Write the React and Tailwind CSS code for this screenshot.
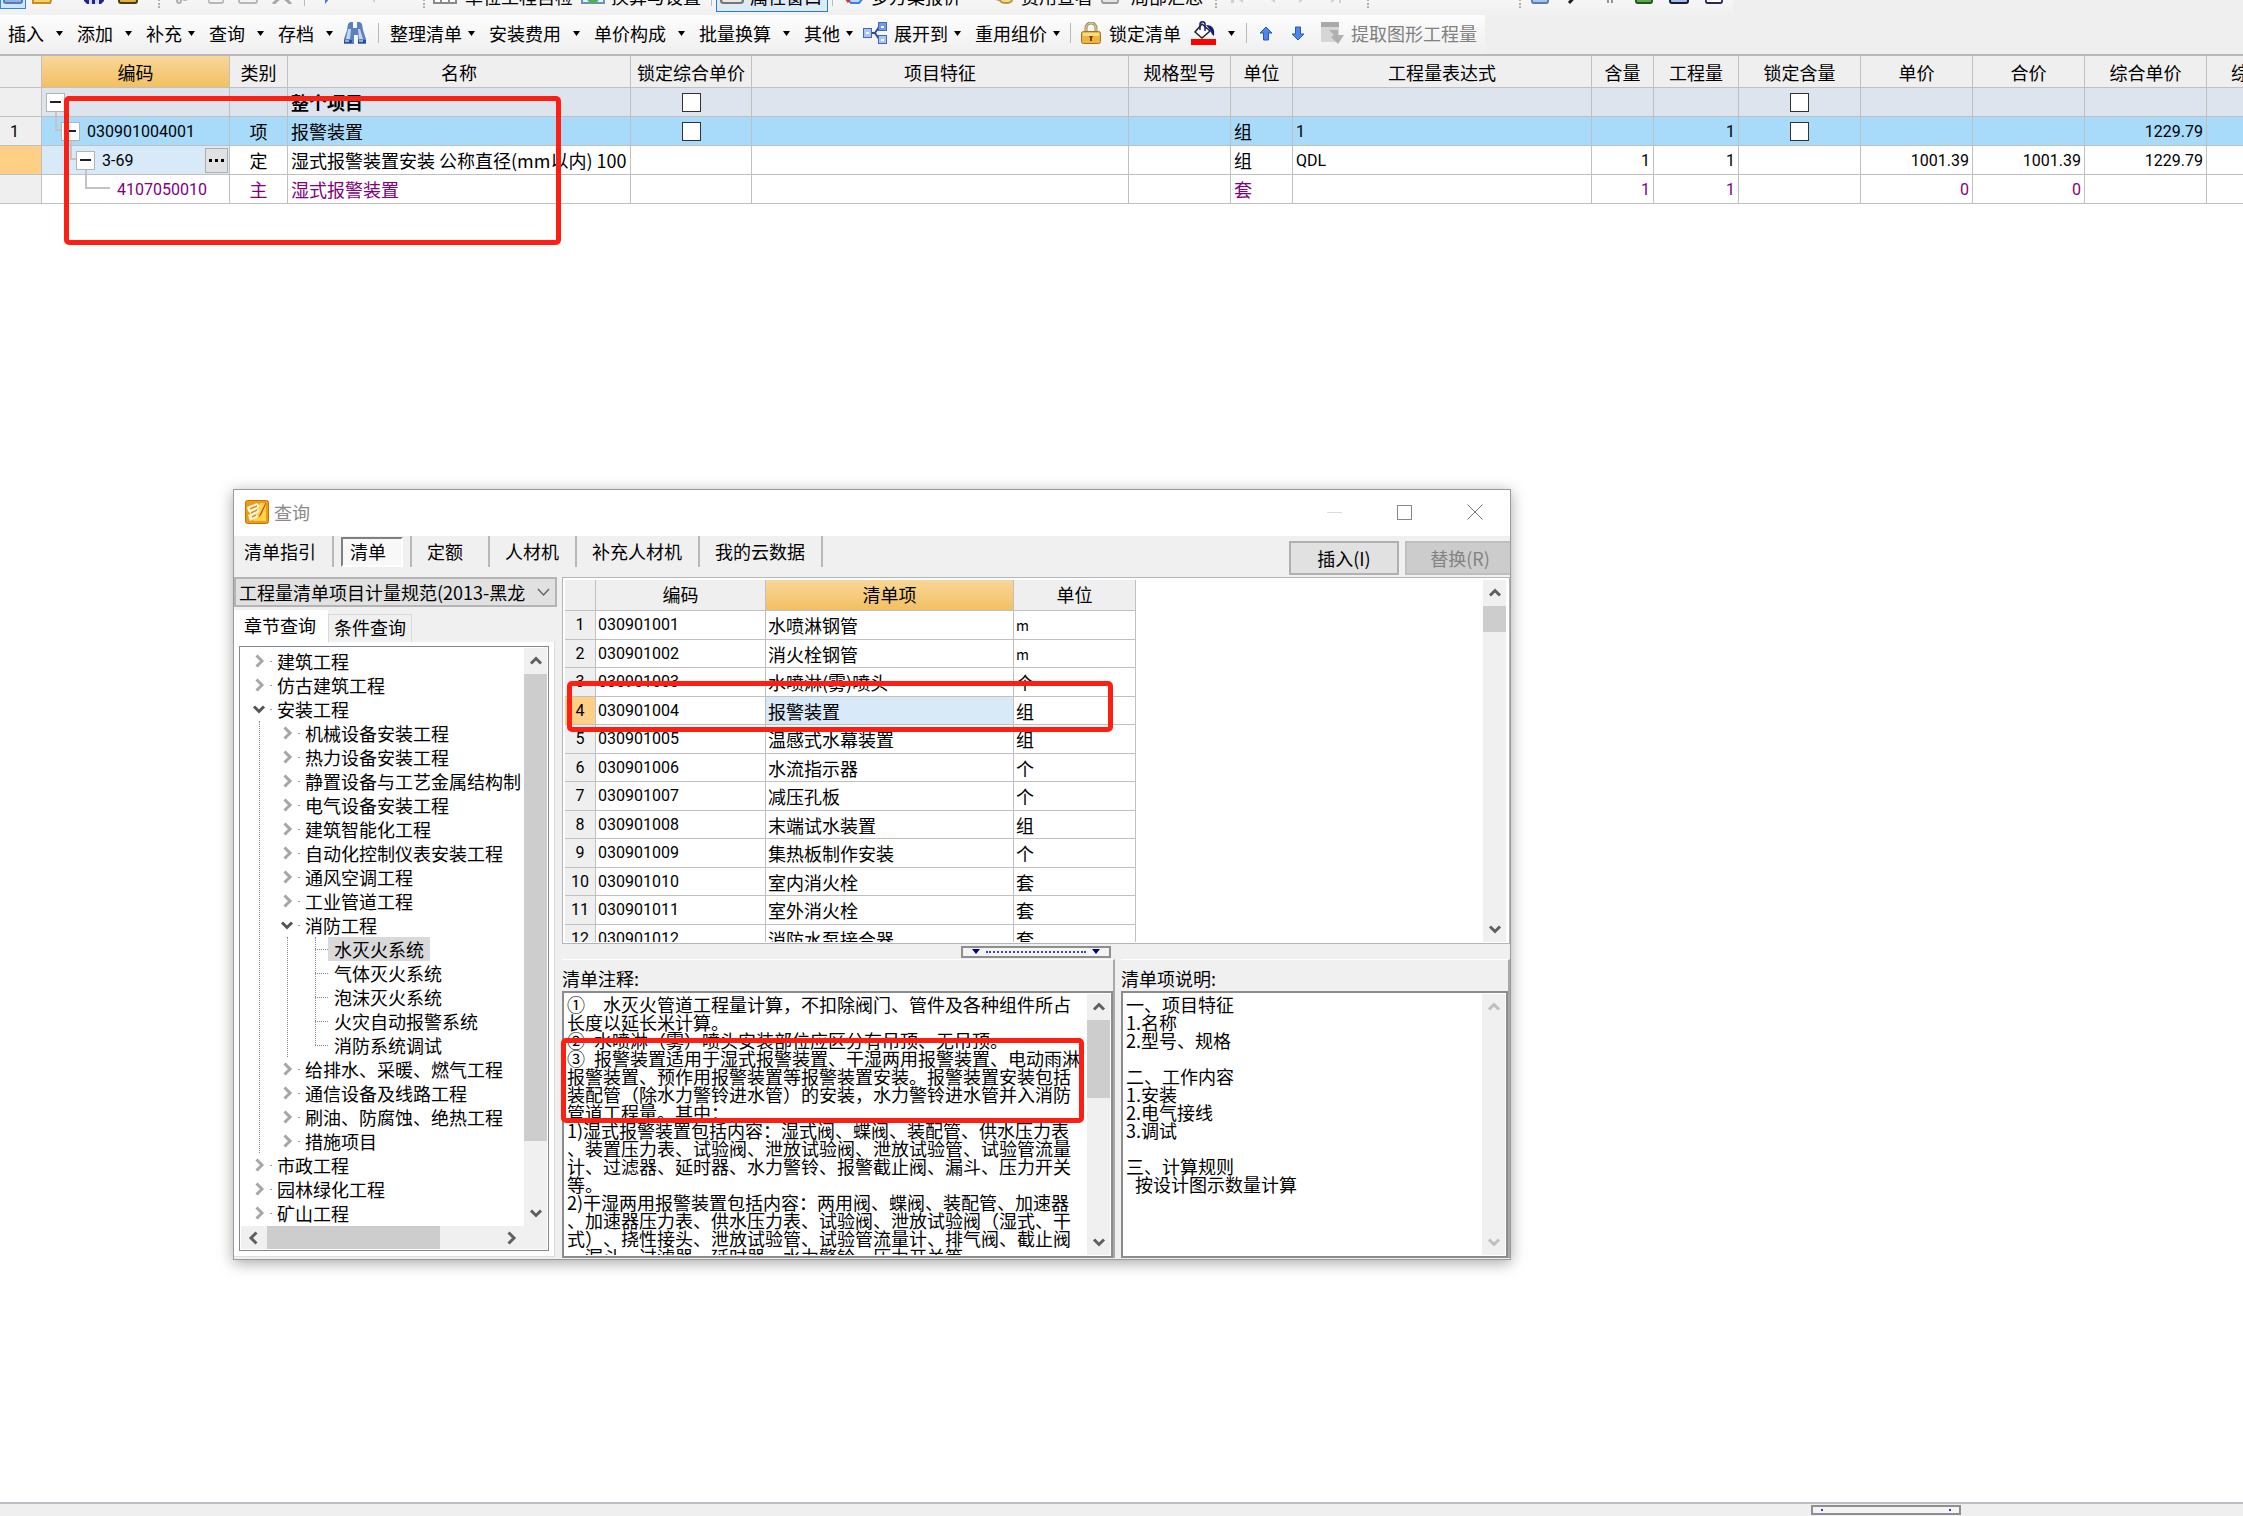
import clsx from "clsx";

const columns = [
  { title: "", width: "w-[42px]" },
  { title: "编码", width: "w-[188px]", active: true },
  { title: "类别", width: "w-[58px]" },
  { title: "名称", width: "w-[343px]" },
  { title: "锁定综合单价", width: "w-[121px]" },
  { title: "项目特征", width: "w-[377px]" },
  { title: "规格型号", width: "w-[102px]" },
  { title: "单位", width: "w-[62px]" },
  { title: "工程量表达式", width: "w-[299px]" },
  { title: "含量", width: "w-[62px]" },
  { title: "工程量", width: "w-[85px]" },
  { title: "锁定含量", width: "w-[122px]" },
  { title: "单价", width: "w-[112px]" },
  { title: "合价", width: "w-[112px]" },
  { title: "综合单价", width: "w-[122px]" },
  { title: "综合合价", width: "w-[121px]" },
];

const budgetRows = [
  { level: 0, name: "整个项目", bold: true, check: true, bg: "bg-[#dde4ee]" },
  { no: "1", level: 1, code: "030901004001", kind: "项", name: "报警装置", check: true, unit: "组", expr: "1", qty: "1", total: "1229.79", bg: "bg-[#a8dbfa]" },
  { level: 2, code: "3-69", kind: "定", name: "湿式报警装置安装 公称直径(mm以内) 100", unit: "组", expr: "QDL", content: "1", qty: "1", price: "1001.39", sum: "1001.39", total: "1229.79", current: true },
  { level: 3, code: "4107050010", kind: "主", name: "湿式报警装置", unit: "套", content: "1", qty: "1", price: "0", sum: "0", color: "text-[#800080]" },
];

const listItems = [
  ["030901001", "水喷淋钢管", "m"],
  ["030901002", "消火栓钢管", "m"],
  ["030901003", "水喷淋(雾)喷头", "个"],
  ["030901004", "报警装置", "组"],
  ["030901005", "温感式水幕装置", "组"],
  ["030901006", "水流指示器", "个"],
  ["030901007", "减压孔板", "个"],
  ["030901008", "末端试水装置", "组"],
  ["030901009", "集热板制作安装", "个"],
  ["030901010", "室内消火栓", "套"],
  ["030901011", "室外消火栓", "套"],
  ["030901012", "消防水泵接合器", "套"],
];

const tree = [
  { text: "建筑工程" },
  { text: "仿古建筑工程" },
  {
    text: "安装工程",
    children: [
      { text: "机械设备安装工程" },
      { text: "热力设备安装工程" },
      { text: "静置设备与工艺金属结构制" },
      { text: "电气设备安装工程" },
      { text: "建筑智能化工程" },
      { text: "自动化控制仪表安装工程" },
      { text: "通风空调工程" },
      { text: "工业管道工程" },
      {
        text: "消防工程",
        children: [
          { text: "水灭火系统", leaf: true, selected: true },
          { text: "气体灭火系统", leaf: true },
          { text: "泡沫灭火系统", leaf: true },
          { text: "火灾自动报警系统", leaf: true },
          { text: "消防系统调试", leaf: true },
        ],
      },
      { text: "给排水、采暖、燃气工程" },
      { text: "通信设备及线路工程" },
      { text: "刷油、防腐蚀、绝热工程" },
      { text: "措施项目" },
    ],
  },
  { text: "市政工程" },
  { text: "园林绿化工程" },
  { text: "矿山工程" },
];

const notes = `①\u3000水灭火管道工程量计算，不扣除阀门、管件及各种组件所占
长度以延长米计算。
②\u2002水喷淋（雾）喷头安装部位应区分有吊顶、无吊顶。
③\u2002报警装置适用于湿式报警装置、干湿两用报警装置、电动雨淋
报警装置、预作用报警装置等报警装置安装。报警装置安装包括
装配管（除水力警铃进水管）的安装，水力警铃进水管并入消防
管道工程量。其中：
1)湿式报警装置包括内容：湿式阀、蝶阀、装配管、供水压力表
、装置压力表、试验阀、泄放试验阀、泄放试验管、试验管流量
计、过滤器、延时器、水力警铃、报警截止阀、漏斗、压力开关
等。
2)干湿两用报警装置包括内容：两用阀、蝶阀、装配管、加速器
、加速器压力表、供水压力表、试验阀、泄放试验阀（湿式、干
式）、挠性接头、泄放试验管、试验管流量计、排气阀、截止阀
、漏斗、过滤器、延时器、水力警铃、压力开关等。`;

const details = `一、项目特征
1.名称
2.型号、规格

二、工作内容
1.安装
2.电气接线
3.调试

三、计算规则
\u2002按设计图示数量计算`;

function Caret() {
  return (
    <svg className="w-[7px] h-[5px] shrink-0" viewBox="0 0 7 5">
      <path d="M0 0h7L3.5 5z" fill="#000" />
    </svg>
  );
}

function Chevron({ dir, className = "text-[#606060]" }) {
  const d = {
    up: "M2 9.5 7 4.5l5 5",
    down: "M2 4.5l5 5 5-5",
    left: "M9.5 1.500 4 7l5.500 5.500",
    right: "M4.5 1.500 10 7l-5.500 5.500",
  }[dir];
  return (
    <svg className={clsx("w-[14px] h-[14px] shrink-0", className)} viewBox="0 0 14 14" fill="none" stroke="currentColor" strokeWidth="3">
      <path d={d} />
    </svg>
  );
}

function Binoculars() {
  return (
    <svg className="w-6 h-6 shrink-0" viewBox="0 0 24 24">
      <path d="M5 3l2-2h3v6h4V1h3l2 2 1 6 3 9v5h-8v-9h-4v9H1v-5l3-9z" fill="#5b82bd" />
      <path d="M5 8l-2 10h4l1-10zM15 8l1 10h4l-3-10z" fill="#c3d5ef" />
      <path d="M1 19h8v3H1zM15 19h8v3h-8z" fill="#2c4f93" />
      <path d="M2 19h4v2H2zM16 19h4v2h-4z" fill="#8fb0e0" />
    </svg>
  );
}

function NodesIcon() {
  return (
    <svg className="w-[25px] h-6 shrink-0" viewBox="0 0 25 24">
      <path d="M8 12h5M16 6l-4 6 4 6" stroke="#2f4f92" strokeWidth="2" fill="none" />
      <g stroke="#4468b4">
        <rect x=".5" y="7.500" width="8" height="9" fill="#a9c5f5" />
        <rect x="15.500" y="1.500" width="8" height="8" fill="#6f9bee" />
        <rect x="15.500" y="14.500" width="8" height="8" fill="#a9c5f5" />
      </g>
      <path d="M3 12h3M18 6h3M18 19h3" stroke="#fff" strokeWidth="2" />
    </svg>
  );
}

function LockIcon() {
  return (
    <svg className="w-5 h-[22px] shrink-0" viewBox="0 0 20 22">
      <path d="M5 10V6a5 5 0 0 1 10 0v4" fill="none" stroke="#9a8a5a" strokeWidth="3" />
      <path d="M5 10V6a5 5 0 0 1 10 0v4" fill="none" stroke="#e6dcae" />
      <rect x=".5" y="9.500" width="19" height="12" rx="2" fill="#eeb63e" stroke="#a8741a" />
      <path d="M2 11h16v3H2z" fill="#fadb86" />
      <path d="M8 14h4l-1 2v3H9v-3z" fill="#6b4508" />
    </svg>
  );
}

function BucketIcon() {
  return (
    <svg className="w-[25px] h-6 shrink-0" viewBox="0 0 25 24">
      <path d="M11 3l8 7-8 7-7-6z" fill="#fff" stroke="#222" strokeWidth="1.500" />
      <path d="M9 9V3c0-3 5-3 5 0v7" stroke="#151d7a" strokeWidth="1.500" fill="none" />
      <path d="M15 4c7 0 9 4 8 11-2-1-3-4-4-6z" fill="#151d7a" />
      <path d="M0 18h25v6H0z" fill="#f00" />
    </svg>
  );
}

function BlueArrow({ down }) {
  return (
    <svg className={clsx("w-[14px] h-[15px] shrink-0", down && "rotate-180")} viewBox="0 0 14 15">
      <path d="M7 1l6 6H9.500v7h-5V7H1z" fill="#4f86ea" stroke="#2659b8" />
    </svg>
  );
}

function ExtractIcon() {
  return (
    <svg className="w-6 h-[22px] shrink-0" viewBox="0 0 24 22">
      <path d="M0 0h18v5H0z" fill="#a9a9a9" />
      <path d="M0 5h18v15H0z" fill="#d6d6d6" />
      <path d="M8 8h9v5h6l-6 9-7-7 3-2z" fill="#b0b0b0" />
    </svg>
  );
}

function AppIcon() {
  return (
    <svg className="w-6 h-6" viewBox="0 0 24 24">
      <rect x=".5" y=".5" width="23" height="23" rx="2" fill="#ef9c14" stroke="#c9720a" />
      <path d="M15 3h6v18H8z" fill="#ffd34a" />
      <path d="M2 7l10-4 3 3-3 3 3 2-4 3 2 3-8 4-2-6 3-1-3-3z" fill="#fff6dc" />
      <path d="M5 9l7-3M6 13l6-3M7 17l4-2" stroke="#d98a1c" strokeWidth="1.500" />
      <path d="M21 2l-6 12-2 4 3-3 5-11z" fill="#c93c12" />
    </svg>
  );
}

function TinyIcon({ className, fill, edge }) {
  return (
    <svg className={clsx("h-4 shrink-0", className)} viewBox="0 0 20 16" preserveAspectRatio="none">
      <rect x="1" y="1" width="18" height="14" rx="2" fill={fill} stroke={edge} strokeWidth="2" />
      <path d="M5 11h10" stroke={edge} strokeWidth="2" />
    </svg>
  );
}

function Grip({ className }) {
  return <span className={clsx("w-[2px] h-6 shrink-0 border-l-2 border-dotted border-[#b0b0b0]", className)} />;
}

function Divider({ className }) {
  return <span className={clsx("w-px shrink-0 bg-[#b9b9b9]", className)} />;
}

function TopStrip() {
  return (
    <div className="h-[15px] overflow-hidden flex flex-col justify-end">
      <div className="h-[38px] shrink-0 w-[1733px] flex items-center bg-linear-to-b from-white to-[#f0f0f0]">
        <span className="w-[26px] h-[26px] shrink-0 flex items-center justify-center bg-[#cfe6fa] border border-[#2a8ae0]">
          <TinyIcon className="w-[20px]" fill="#8fb4e4" edge="#5a7ab0" />
        </span>
        <svg className="w-[22px] h-4 ml-[6px] shrink-0" viewBox="0 0 22 16">
          <path d="M1 15V3h16v4h4l-3 8z" fill="#f8cf6a" stroke="#c98f1e" strokeWidth="2" />
        </svg>
        <svg className="w-[20px] h-4 ml-[30px] shrink-0" viewBox="0 0 20 16">
          <path d="M0 0h20v13l-3 3H3l-3-3z" fill="#24248c" />
          <path d="M5 9h3v7H5zM11 9h4v7h-4z" fill="#d8dcff" />
        </svg>
        <TinyIcon className="w-[20px] ml-[14px]" fill="#e3b23a" edge="#4a3a10" />
        <Grip className="ml-[20px]" />
        <svg className="w-[14px] h-4 ml-[16px] shrink-0" viewBox="0 0 14 16" fill="none" stroke="#b0b0b0" strokeWidth="2">
          <circle cx="3" cy="13" r="2" />
          <circle cx="9" cy="10" r="2" />
        </svg>
        <TinyIcon className="w-[16px] ml-[18px]" fill="#f4f4f4" edge="#b8b8b8" />
        <TinyIcon className="w-[20px] ml-[14px]" fill="#f4f4f4" edge="#b8b8b8" />
        <svg className="w-[20px] h-4 ml-[14px] shrink-0" viewBox="0 0 20 16">
          <path d="M1 0l18 16M19 0L1 16" stroke="#a8a8a8" strokeWidth="3" />
        </svg>
        <Divider className="ml-[12px] h-5" />
        <svg className="w-[12px] h-4 ml-[18px] shrink-0" viewBox="0 0 12 16">
          <path d="M12 4L2 16V6z" fill="#3c7be0" />
        </svg>
        <svg className="w-[12px] h-4 ml-[32px] shrink-0" viewBox="0 0 12 16">
          <path d="M0 6l8 9V4z" fill="#d0d0d0" />
        </svg>
        <Grip className="ml-[44px]" />
        <svg className="w-[24px] h-4 ml-[8px] shrink-0" viewBox="0 0 24 16" fill="#fff" stroke="#8a8a8a" strokeWidth="2">
          <path d="M1 1h22v14H1zM1 10h22M8 1v14M16 1v14" />
        </svg>
        <span className="ml-[8px] w-[108px] shrink-0">单位工程自检</span>
        <svg className="w-[24px] h-4 ml-[8px] shrink-0" viewBox="0 0 24 16">
          <path d="M1 0h22v15H1z" fill="#e6effa" stroke="#6a92c0" strokeWidth="2" />
          <path d="M6 8c1 5 4 5 6 6 2-1 5-1 6-6" fill="none" stroke="#4fb050" strokeWidth="3" />
        </svg>
        <span className="ml-[6px] w-[94px] shrink-0">换算与设置</span>
        <Divider className="ml-[6px] h-5" />
        <button className="ml-[4px] w-[112px] h-[31px] shrink-0 flex items-center gap-[6px] px-[3px] bg-[#deebf7] border border-[#1b82dc]">
          <TinyIcon className="w-[24px]" fill="#e8e8e8" edge="#777" />
          属性窗口
        </button>
        <Divider className="ml-[4px] h-5" />
        <svg className="w-[20px] h-4 ml-[12px] shrink-0" viewBox="0 0 20 16">
          <path d="M1 9l5 6h8l5-6-9-7z" fill="#bcd8ff" stroke="#3d7fe6" strokeWidth="2" />
          <path d="M0 9l4 5" stroke="#e03030" strokeWidth="3" />
        </svg>
        <span className="ml-[6px] w-[90px] shrink-0">多方案报价</span>
        <svg className="w-[20px] h-4 ml-[32px] shrink-0" viewBox="0 0 20 16" fill="#f0d890" stroke="#b8943e" strokeWidth="2">
          <ellipse cx="7" cy="8" rx="6" ry="4" />
          <ellipse cx="13" cy="12" rx="6" ry="3" />
        </svg>
        <span className="ml-[8px] w-[72px] shrink-0">费用查看</span>
        <TinyIcon className="w-[18px] ml-[8px]" fill="#e4e4e4" edge="#9a9a9a" />
        <span className="ml-[12px] w-[72px] shrink-0">局部汇总</span>
        <Grip className="ml-[12px]" />
        <svg className="w-[110px] h-4 ml-[14px] shrink-0" viewBox="0 0 110 16" fill="#d0d0d0">
          <path d="M0 4h3v11H0zM12 3v12L4 9zM44 3v12l-8-6zM68 3v12l8-6zM100 3v12l8-6zM108 4h2v11h-2z" />
        </svg>
        <Grip className="ml-[26px]" />
        <Grip className="ml-[150px]" />
        <TinyIcon className="w-[18px] ml-[10px]" fill="#a9c5ee" edge="#5a7ab0" />
        <svg className="w-[12px] h-4 ml-[18px] shrink-0" viewBox="0 0 12 16">
          <path d="M12 4L2 15" stroke="#222" strokeWidth="3" />
        </svg>
        <svg className="w-[10px] h-4 ml-[26px] shrink-0" viewBox="0 0 10 16">
          <path d="M3 2v13M7 2v13" stroke="#333" />
        </svg>
        <TinyIcon className="w-[18px] ml-[20px]" fill="#5aa84a" edge="#1f5a1a" />
        <TinyIcon className="w-[20px] ml-[16px]" fill="#9cc0f4" edge="#1a1a2a" />
        <TinyIcon className="w-[18px] ml-[16px]" fill="#fff" edge="#2a2a5a" />
      </div>
    </div>
  );
}

function MenuButton({ children, wide, icon }) {
  return (
    <button className={clsx("flex items-center shrink-0", wide ? "gap-3" : "gap-[6px]")}>
      {icon}
      {children}
      <Caret />
    </button>
  );
}

function Toolbar() {
  return (
    <div className="h-[39px] flex items-center w-[1485px] pl-2 pb-[3px] whitespace-nowrap bg-linear-to-b from-[#fdfdfd] to-[#efefef]">
      <div className="flex items-center gap-[14px] shrink-0">
        <MenuButton wide>插入</MenuButton>
        <MenuButton wide>添加</MenuButton>
        <MenuButton>补充</MenuButton>
        <MenuButton wide>查询</MenuButton>
        <MenuButton wide>存档</MenuButton>
      </div>
      <button className="ml-[10px]" aria-label="查找"><Binoculars /></button>
      <Divider className="ml-[11px] mr-[11px] h-5" />
      <div className="flex items-center gap-[14px] shrink-0">
        <MenuButton>整理清单</MenuButton>
        <MenuButton wide>安装费用</MenuButton>
        <MenuButton wide>单价构成</MenuButton>
        <MenuButton wide>批量换算</MenuButton>
        <MenuButton>其他</MenuButton>
      </div>
      <div className="flex items-center gap-[14px] shrink-0 ml-[10px]">
        <MenuButton icon={<NodesIcon />}>展开到</MenuButton>
        <MenuButton>重用组价</MenuButton>
      </div>
      <Divider className="mx-[10px] h-5" />
      <button className="flex items-center gap-2 shrink-0"><LockIcon />锁定清单</button>
      <button className="flex items-center gap-3 shrink-0 ml-[10px]" aria-label="填充颜色"><BucketIcon /><Caret /></button>
      <Divider className="ml-[11px] mr-[12px] h-5" />
      <button className="shrink-0" aria-label="上移"><BlueArrow /></button>
      <button className="shrink-0 ml-[18px]" aria-label="下移"><BlueArrow down /></button>
      <button className="flex items-center gap-[6px] shrink-0 ml-[16px] text-[#808080]"><ExtractIcon />提取图形工程量</button>
    </div>
  );
}

const pads = ["pl-[4px]", "pl-[19px]", "pl-[34px]", "pl-[75px]"];
const elbows = ["", "left-[13px] w-[7px]", "left-[28px] w-[7px]", "left-[43px] w-[25px]"];
const stems = ["left-[13px]", "left-[28px]", "left-[43px]", ""];

function CodeCell({ row }) {
  return (
    <div className={clsx("relative h-[28px] flex items-center gap-[7px] font-['Roboto'] text-base", pads[row.level])}>
      {row.level > 0 && <span className={clsx("absolute top-0 h-[14px] border-l-2 border-b-2 border-[#c4c4c4]", elbows[row.level])} />}
      {row.level < 3 && <span className={clsx("absolute bottom-0 h-[6px] border-l-2 border-[#c4c4c4]", stems[row.level])} />}
      {row.level < 3 && (
        <button className="relative w-[19px] h-[19px] shrink-0 flex items-center justify-center bg-white border border-[#b4b4b4]" aria-label="折叠">
          <span className="w-[11px] h-[2px] bg-[#222]" />
        </button>
      )}
      <span className="pt-[2px]">{row.code}</span>
      {row.current && (
        <button className="ml-auto mr-px w-[23px] h-[25px] flex items-center justify-center gap-[3px] bg-[#e1e1e1] border border-[#adadad]" aria-label="选择">
          <span className="w-[3px] h-[3px] bg-black" />
          <span className="w-[3px] h-[3px] bg-black" />
          <span className="w-[3px] h-[3px] bg-black" />
        </button>
      )}
    </div>
  );
}

function CheckBox({ label }) {
  return <input type="checkbox" aria-label={label} className="appearance-none block mx-auto w-[19px] h-[19px] bg-white border border-[#333]" />;
}

function BudgetTable() {
  const cell = "h-[29px] p-0 px-[3px] leading-6 border-r border-b border-[#c0c0c0]";
  const latin = "pt-[2px] font-['Roboto'] text-base";
  const num = clsx(cell, latin, "text-right");
  return (
    <table className="table-fixed border-separate border-spacing-0 w-full min-w-[2328px] whitespace-nowrap">
      <colgroup>
        {columns.map((c, i) => <col key={i} className={c.width} />)}
      </colgroup>
      <thead>
        <tr>
          {columns.map((c, i) => (
            <th
              key={i}
              className={clsx(
                "h-[32px] p-0 font-normal leading-6 border-r border-b border-[#c0c0c0]",
                c.active ? "bg-linear-to-b from-[#f9d798] to-[#f2c061]" : "bg-[#efefef]"
              )}
            >
              {c.title}
            </th>
          ))}
        </tr>
      </thead>
      <tbody>
        {budgetRows.map((row, i) => (
          <tr key={i} className={clsx(row.bg, row.color)}>
            <td className={clsx(cell, latin, row.current ? "bg-[#ffcf85]" : "bg-[#efefef]")}>
              <span className="pl-[7px]">{row.no}</span>
            </td>
            <td className={clsx("h-[29px] p-0 border-r border-b border-[#c0c0c0]", row.current && "bg-[#d8e9f8]")}>
              <CodeCell row={row} />
            </td>
            <td className={clsx(cell, "text-center")}>{row.kind}</td>
            <td className={clsx(cell, row.bold && "font-bold")}>{row.name}</td>
            <td className={cell}>{row.check && <CheckBox label="锁定综合单价" />}</td>
            <td className={cell} />
            <td className={cell} />
            <td className={cell}>{row.unit}</td>
            <td className={clsx(cell, latin)}>{row.expr}</td>
            <td className={num}>{row.content}</td>
            <td className={num}>{row.qty}</td>
            <td className={cell}>{row.check && <CheckBox label="锁定含量" />}</td>
            <td className={num}>{row.price}</td>
            <td className={num}>{row.sum}</td>
            <td className={num}>{row.total}</td>
            <td className={cell} />
          </tr>
        ))}
      </tbody>
    </table>
  );
}

function TreeNode({ node, level }) {
  const open = Boolean(node.children);
  return (
    <li>
      <div className="h-6 flex items-center whitespace-nowrap">
        {node.leaf ? (
          <span className="w-[13px] ml-[7px] border-t border-dotted border-[#888]" />
        ) : (
          <>
            <Chevron dir={open ? "down" : "right"} className={clsx("mr-[4px]", open ? "text-[#555]" : "text-[#a6a6a6]")} />
            <span className="w-[2px] h-px mr-[5px] bg-[#999]" />
          </>
        )}
        <span className={clsx("leading-6", node.leaf && "px-[6px]", node.selected && "bg-[#d9d9d9]")}>{node.text}</span>
      </div>
      {open && (
        <ul className="relative pl-[28px]">
          <span className="absolute left-[7px] top-0 bottom-0 border-l border-dotted border-[#888]" />
          {level === 1 && <span className="absolute left-[35px] top-0 bottom-3 border-l border-dotted border-[#888]" />}
          {node.children.map((child) => <TreeNode key={child.text} node={child} level={level + 1} />)}
        </ul>
      )}
    </li>
  );
}

function VScroll({ thumb, disabled }) {
  const tone = disabled ? "text-[#bfbfbf]" : "text-[#606060]";
  return (
    <div className="w-[23px] shrink-0 flex flex-col items-center bg-[#f0f0f0]">
      <span className="h-[26px] flex items-center"><Chevron dir="up" className={tone} /></span>
      <span className="flex-1 w-full">{thumb && <span className={clsx("block w-full bg-[#cdcdcd]", thumb)} />}</span>
      <span className="h-[26px] flex items-center"><Chevron dir="down" className={tone} /></span>
    </div>
  );
}

function ChapterPanel() {
  return (
    <div className="w-[323px] shrink-0 flex flex-col">
      <label className="relative block">
        <span className="sr-only">规范</span>
        <select className="appearance-none block w-full h-[30px] pl-[3px] pb-px pr-7 bg-[#e1e1e1] border-2 border-[#b4b4b4] leading-6">
          <option>工程量清单项目计量规范(2013-黑龙</option>
        </select>
        <svg className="absolute right-[7px] top-[10px] w-[13px] h-[10px] pointer-events-none" viewBox="0 0 13 10" fill="none" stroke="#666" strokeWidth="1.500">
          <path d="M1 2l5.500 6L12 2" />
        </svg>
      </label>
      <div className="h-[35px] flex items-end">
        <button className="w-[94px] h-[32px] pb-[3px] pr-[2px] bg-white text-center">章节查询</button>
        <button className="w-[84px] h-[28px] pb-[3px] bg-[#f0f0f0] border border-b-0 border-[#d9d9d9]">条件查询</button>
      </div>
      <div className="w-[321px] flex-1 min-h-0 mb-[2px] p-[5px] pt-[4px] bg-white border-r border-b border-[#dcdcdc] flex">
        <div className="flex-1 min-w-0 p-[1px] border border-[#828790] flex flex-col">
          <div className="flex-1 min-h-0 flex">
            <ul className="flex-1 min-w-0 overflow-hidden pl-[11px] pt-px">
              {tree.map((node) => <TreeNode key={node.text} node={node} level={0} />)}
            </ul>
            <VScroll thumb="h-[467px]" />
          </div>
          <div className="h-[23px] flex items-center bg-[#f0f0f0] pr-[23px]">
            <span className="w-[26px] flex justify-center"><Chevron dir="left" /></span>
            <span className="flex-1 h-full"><span className="block w-[173px] h-full bg-[#cdcdcd]" /></span>
            <span className="w-[26px] flex justify-center"><Chevron dir="right" /></span>
          </div>
        </div>
      </div>
    </div>
  );
}

function ItemTable() {
  const head = "h-[31px] p-0 pb-[2px] font-normal leading-6 border-r border-b border-[#c0c0c0]";
  const cell = "p-0 px-[2px] leading-6 border-r border-b border-[#c0c0c0]";
  return (
    <div className="h-[367px] pl-[2px] pt-[2px] pr-[3px] pb-px bg-white border border-[#b4b4bc] flex">
      <div className="flex-1 min-w-0 overflow-hidden">
        <table className="table-fixed border-separate border-spacing-0 w-[571px] whitespace-nowrap">
          <thead>
            <tr>
              <th className={clsx(head, "w-[31px] bg-[#efefef]")} />
              <th className={clsx(head, "w-[170px] bg-[#efefef]")}>编码</th>
              <th className={clsx(head, "w-[248px] bg-linear-to-b from-[#f9d798] to-[#f2c061]")}>清单项</th>
              <th className={clsx(head, "w-[122px] bg-[#efefef]")}>单位</th>
            </tr>
          </thead>
          <tbody>
            {listItems.map(([code, name, unit], i) => {
              const current = i === 3;
              return (
                <tr key={code} className="odd:h-[29px] even:h-[28px]">
                  <td className={clsx(cell, "text-center font-['Roboto'] text-base", current ? "bg-[#ffcf85]" : "bg-[#efefef]")}>{i + 1}</td>
                  <td className={clsx(cell, "font-['Roboto'] text-base")}>{code}</td>
                  <td className={clsx(cell, current && "bg-[#d8e9f8]")}>{name}</td>
                  <td className={clsx(cell, unit === "m" && "text-sm")}>{unit}</td>
                </tr>
              );
            })}
          </tbody>
        </table>
      </div>
      <VScroll thumb="h-[26px]" />
    </div>
  );
}

function NoteBox({ id, title, text, thumb, disabled, className }) {
  return (
    <div className={clsx("flex flex-col border-t border-r-2 border-t-white border-r-[#a8a8a8]", className)}>
      <label htmlFor={id} className="h-[31px] pt-[6px] leading-6">{title}</label>
      <div className="flex-1 min-h-0 p-px flex bg-white border-2 border-[#8c8c8c]">
        <textarea
          id={id}
          readOnly
          defaultValue={text}
          className="flex-1 min-w-0 resize-none overflow-hidden pl-[2px] py-px leading-[18px] whitespace-pre outline-none [text-spacing-trim:space-all]"
        />
        <VScroll thumb={thumb} disabled={disabled} />
      </div>
    </div>
  );
}

function QueryDialog() {
  const tab = "h-[31px] pl-[15px] pr-4 pb-[2px] min-w-[78px] text-left border-r-2 border-[#b8b8b8]";
  return (
    <section className="absolute left-[233px] top-[489px] w-[1278px] h-[771px] flex flex-col overflow-hidden bg-[#f0f0f0] border border-[#9a9a9a] shadow-[0_3px_14px_rgba(0,0,0,0.35)]">
      <header className="h-[46px] shrink-0 flex items-center bg-white pl-[11px] pb-[2px] text-[#8a8a8a]">
        <AppIcon />
        <h2 className="ml-[5px]">查询</h2>
        <div className="ml-auto mr-[27px] flex items-center gap-[55px]">
          <button className="w-[15px] h-px bg-[#dcdcdc]" aria-label="最小化" />
          <button className="w-[15px] h-[15px] border border-[#888]" aria-label="最大化" />
          <button aria-label="关闭">
            <svg className="w-4 h-4" viewBox="0 0 16 16" stroke="#777">
              <path d="M.5 .5l15 15M15.500 .5l-15 15" />
            </svg>
          </button>
        </div>
      </header>
      <nav className="h-[41px] shrink-0 flex items-start whitespace-nowrap">
        <button className={clsx(tab, "-ml-[5px]")}>清单指引</button>
        <span className="w-[78px] h-[31px] pl-[7px] border-r-2 border-[#b8b8b8]">
          <button className="block w-[62px] h-[30px] mt-px pb-[2px] pl-[7px] text-left bg-[#f8f8f8] border-2 border-t-[#808080] border-l-[#808080] border-r-white border-b-white">清单</button>
        </span>
        <button className={tab}>定额</button>
        <button className={tab}>人材机</button>
        <button className={tab}>补充人材机</button>
        <button className={tab}>我的云数据</button>
        <div className="ml-auto -mr-[5px] mt-[5px] flex gap-[6px]">
          <button className="w-[110px] h-[34px] bg-[#e1e1e1] border-2 border-[#b0b0b0]">插入(I)</button>
          <button className="w-[110px] h-[34px] bg-[#cccccc] border-2 border-[#bfbfbf] text-[#838383]" disabled>替换(R)</button>
        </div>
      </nav>
      <div className="flex-1 min-h-0 flex gap-[5px]">
        <ChapterPanel />
        <div className="flex-1 min-w-0 flex flex-col">
          <ItemTable />
          <div className="h-[15px] shrink-0 flex items-center pl-[399px]">
            <button className="w-[150px] h-[12px] flex items-center justify-between px-[9px] border-2 border-[#8f8f8f] bg-[#f4f4f4]" aria-label="收起">
              <svg className="w-[8px] h-[5px]" viewBox="0 0 8 5"><path d="M0 0h8L4 5z" fill="#00008b" /></svg>
              <span className="w-[100px] border-t-2 border-dotted border-[#4444b0]" />
              <svg className="w-[8px] h-[5px]" viewBox="0 0 8 5"><path d="M0 0h8L4 5z" fill="#00008b" /></svg>
            </button>
          </div>
          <div className="flex-1 min-h-0 flex gap-[6px] pb-px">
            <NoteBox id="notes" title="清单注释:" text={notes} thumb="h-[78px]" className="w-[553px]" />
            <NoteBox id="details" title="清单项说明:" text={details} disabled className="flex-1" />
          </div>
        </div>
      </div>
    </section>
  );
}

export default function App() {
  return (
    <div className="relative min-h-screen overflow-hidden flex flex-col bg-white text-black text-[18px] leading-6 font-['Noto_Sans_CJK_SC',sans-serif]">
      <div className="bg-[#efefef] border-b-2 border-[#b9b9bd] whitespace-nowrap">
        <TopStrip />
        <Toolbar />
      </div>
      <main className="flex-1">
        <BudgetTable />
      </main>
      <footer className="h-[14px] shrink-0 bg-[#efefef] border-t-2 border-[#bcbcc2] flex">
        <button className="ml-[1811px] mt-px w-[150px] h-[10px] flex items-center justify-between px-2 border-2 border-[#8f8f8f] bg-[#f4f4f4]" aria-label="展开">
          <span className="w-[2px] h-[2px] bg-[#3a3ac0]" />
          <span className="w-[2px] h-[2px] bg-[#3a3ac0]" />
        </button>
      </footer>
      <QueryDialog />
      <div className="absolute left-[64px] top-[96px] w-[497px] h-[149px] border-5 border-[#ff1f12] rounded-[5px] pointer-events-none" />
      <div className="absolute left-[567px] top-[681px] w-[546px] h-[51px] border-5 border-[#ff1f12] rounded-[5px] pointer-events-none" />
      <div className="absolute left-[561px] top-[1038px] w-[523px] h-[85px] border-5 border-[#ff1f12] rounded-[5px] pointer-events-none" />
    </div>
  );
}
